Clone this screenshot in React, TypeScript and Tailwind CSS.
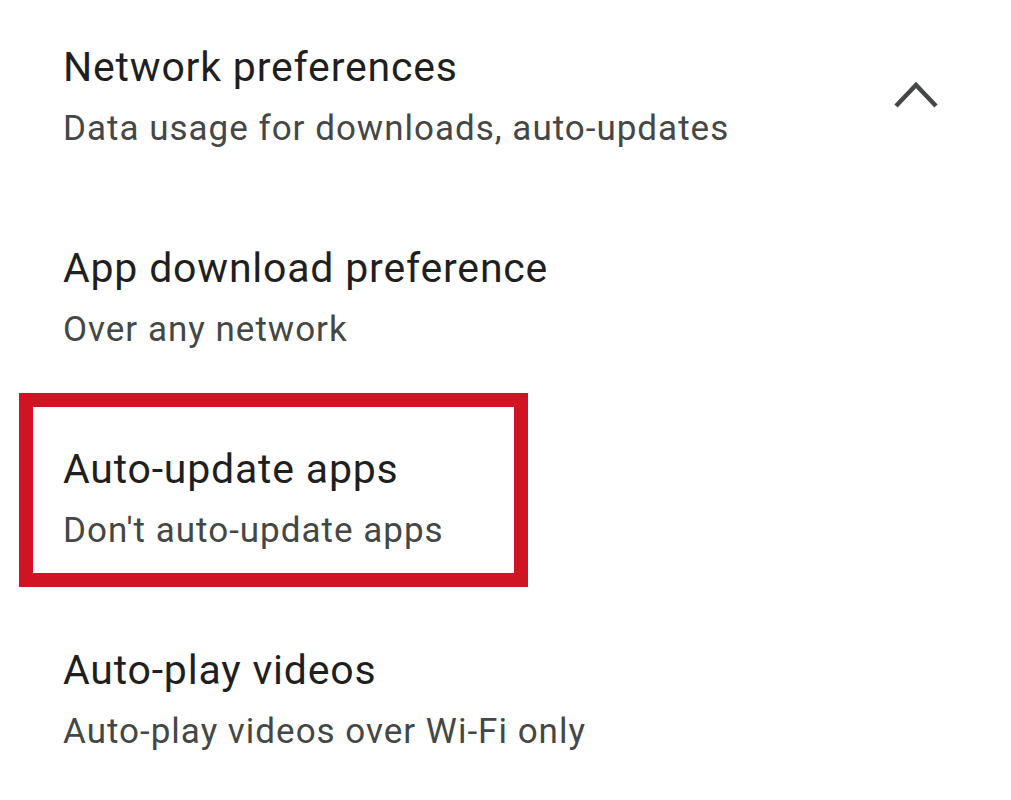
const ITEMS = [
  { title: "Network preferences", subtitle: "Data usage for downloads, auto-updates", expanded: true },
  { title: "App download preference", subtitle: "Over any network" },
  { title: "Auto-update apps", subtitle: "Don't auto-update apps", highlight: true },
  { title: "Auto-play videos", subtitle: "Auto-play videos over Wi-Fi only" },
];

function ChevronUp() {
  return (
    <svg width={44} height={28} viewBox="0 0 44 28" fill="none" stroke="#444746" strokeWidth="4.5" strokeLinejoin="miter">
      <path d="M2 25 L22 4 L42 25" />
    </svg>
  );
}

export default function App() {
  return (
    <div className="w-[1011px] h-[800px] bg-white overflow-hidden font-['Roboto',sans-serif]">
      {ITEMS.map((item, i) => (
        <div key={i} className="relative h-[201px] pt-[41px] pl-[63px] pr-[73px] flex items-start">
          <div className="flex-1">
            <div className="text-[41px] leading-[52px] tracking-[0.8px] text-[#1f1f1f]">{item.title}</div>
            <div className="mt-3 text-[35px] leading-[48px] tracking-[1px] text-[#444746]">{item.subtitle}</div>
          </div>
          {item.expanded && (
            <div className="mt-[40px]">
              <ChevronUp />
            </div>
          )}
          {item.highlight && (
            <div className="absolute left-[19px] top-[-9px] w-[509px] h-[194px] border-[14px] border-[#d01424] pointer-events-none" />
          )}
        </div>
      ))}
    </div>
  );
}
